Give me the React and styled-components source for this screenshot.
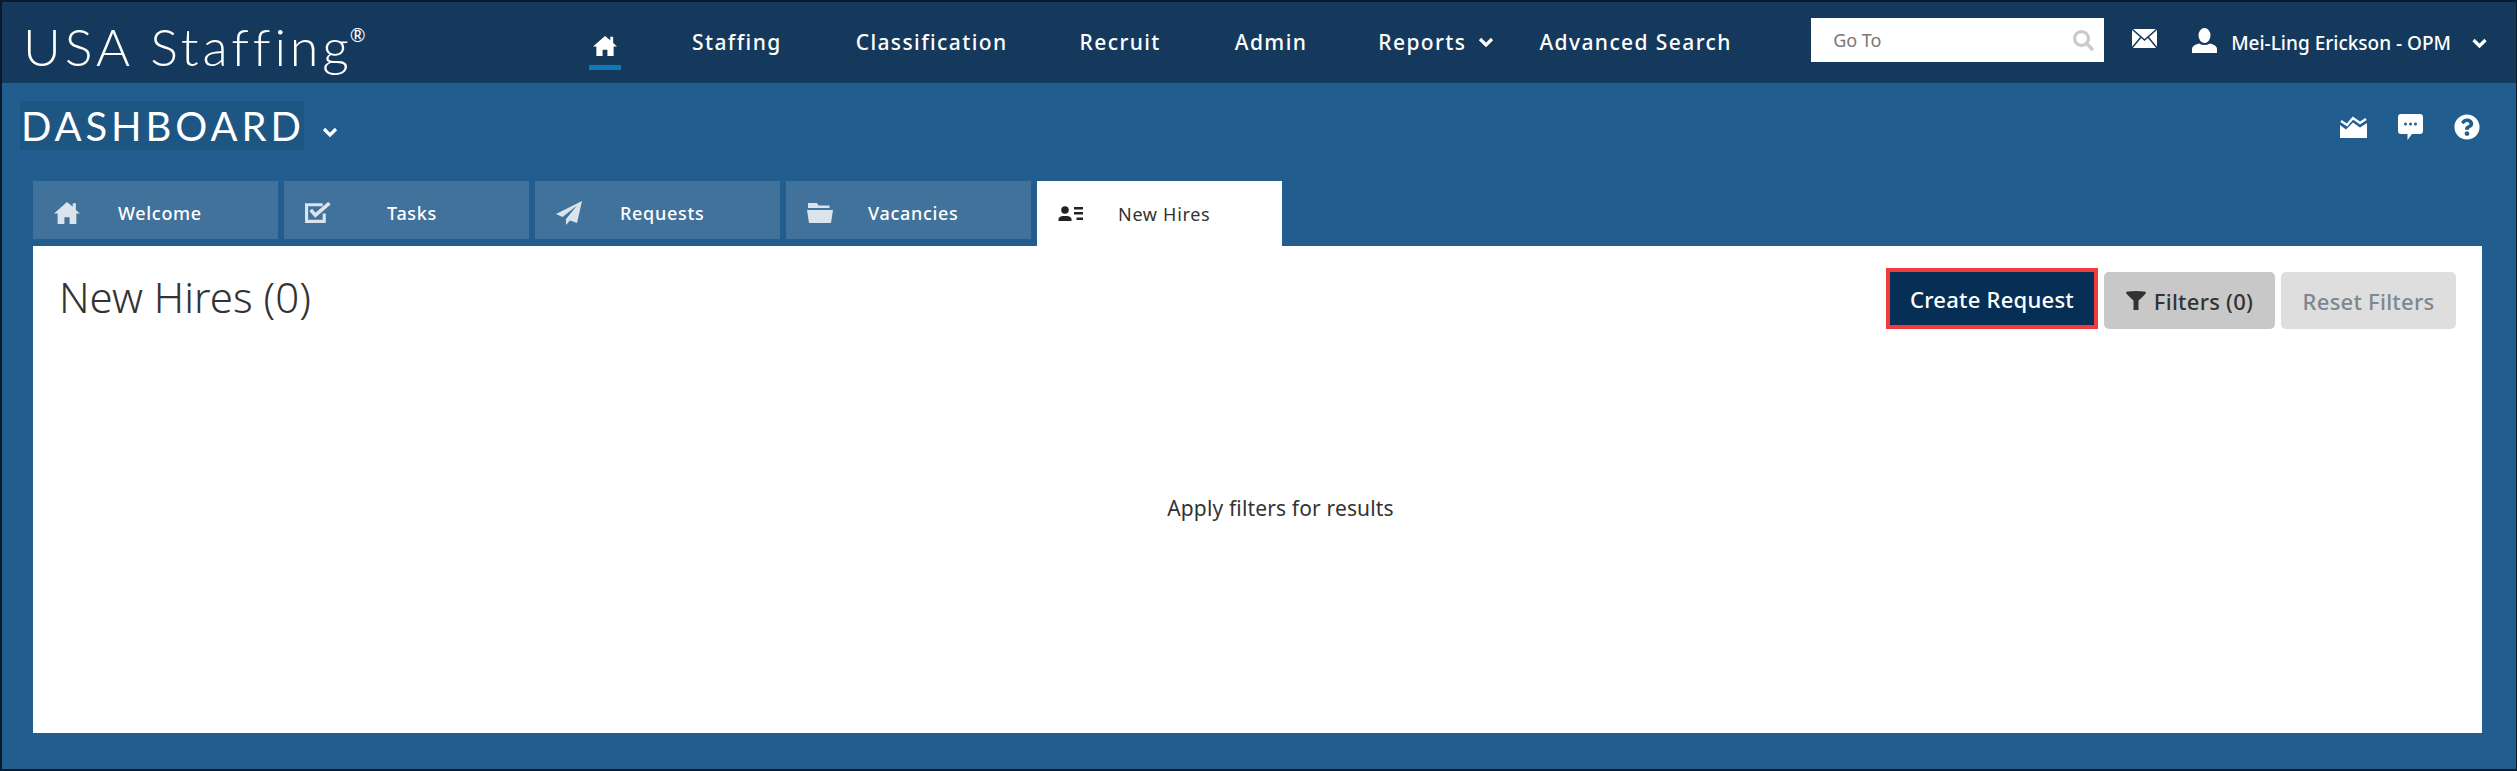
import styled, { createGlobalStyle } from "styled-components";
import { FaQuestionCircle, FaSearch } from "react-icons/fa";

const GlobalStyle = createGlobalStyle`
  html, body { margin: 0; padding: 0; }
  body { font-family: "Noto Sans", "Open Sans", sans-serif; background: #215e8f; }
`;

const Page = styled.div`
  width: 2517px;
  height: 771px;
  box-sizing: border-box;
  border: 2px solid #0a1a2a;
  border-right-width: 1px;
  background: #215e8f;
  overflow: hidden;
  display: flex;
  flex-direction: column;
`;

const TopBar = styled.header`
  height: 81px;
  background: #14395c;
  display: flex;
  align-items: center;
  color: #fff;
  flex-shrink: 0;
`;

const Logo = styled.div`
  width: 587px;
  padding: 7px 0 0 21px;
  box-sizing: border-box;
  font-family: "Lato", sans-serif;
  font-weight: 300;
  font-size: 52px;
  letter-spacing: 3.9px;
  white-space: nowrap;
  sup { font-size: 19px; font-weight: 400; line-height: 0; vertical-align: 24px; letter-spacing: 0; margin-left: -3px; }
`;

const Nav = styled.nav`
  display: flex;
  align-items: center;
  align-self: stretch;
  flex: 1;
  padding-bottom: 2px;
  font-size: 21px;
  font-weight: 500;
  letter-spacing: 1.4px;
`;

const NavItem = styled.a`
  color: #fff;
  white-space: nowrap;
  display: flex;
  align-items: center;
  gap: 12px;
  margin-left: ${(p) => p.$gap}px;
`;

const HomeLink = styled.a`
  align-self: flex-start;
  width: 32px;
  height: 31px;
  margin-top: 32px;
  color: #fff;
  border-bottom: 5px solid #0f7ab8;
  display: flex;
  justify-content: center;
`;

const Search = styled.div`
  width: 293px;
  height: 44px;
  margin-top: -5px;
  background: #fff;
  box-sizing: border-box;
  padding: 0 10px 0 22px;
  display: flex;
  align-items: center;
  justify-content: space-between;
  font-size: 18px;
  color: #777;
  svg { color: #cbcbcb; font-size: 21px; }
`;

const MailIcon = styled.svg`
  width: 25px;
  height: 19px;
  margin: -8px 0 0 28px;
  flex-shrink: 0;
`;

const UserArea = styled.div`
  display: flex;
  align-items: center;
  font-size: 19px;
  font-weight: 500;
  color: #fff;
  margin-left: 35px;
  white-space: nowrap;
`;

const UserIcon = styled.svg`
  width: 25px;
  height: 25px;
  margin-top: -5px;
`;

const UserName = styled.span`
  margin-left: 14px;
`;

const Chevron = styled.svg`
  width: ${(p) => p.$w || 16}px;
  height: 10px;
  margin-left: ${(p) => p.$left || 0}px;
  flex-shrink: 0;
`;

const ChevronEnd = styled(Chevron)`
  margin-right: 28px;
`;

const Row = styled.div`
  display: flex;
  align-items: flex-start;
  justify-content: space-between;
  height: 98px;
  flex-shrink: 0;
  padding: 18px 36px 0 18px;
  box-sizing: border-box;
`;

const TitleWrap = styled.div`
  display: flex;
  align-items: center;
  color: #fff;
`;

const Title = styled.h1`
  margin: 0;
  font-family: "Lato", sans-serif;
  font-weight: 400;
  font-size: 40px;
  letter-spacing: 3.9px;
  background: #1d5583;
  height: 49px;
  line-height: 50px;
  width: 284px;
  box-sizing: border-box;
  padding-left: 1px;
  white-space: nowrap;
`;

const TitleChevron = styled(Chevron)`
  margin: 13px 0 0 18px;
`;

const HelpIcons = styled.div`
  display: flex;
  align-items: center;
  gap: 31px;
  color: #fff;
  margin-top: 13px;
  > svg:last-child { width: 26px; height: 26px; }
`;

const Tabs = styled.div`
  display: flex;
  gap: 6px;
  padding-left: 31px;
  height: 65px;
  flex-shrink: 0;
`;

const Tab = styled.div`
  width: 245px;
  height: ${(p) => (p.$active ? "65px" : "58px")};
  background: ${(p) => (p.$active ? "#fff" : "#41729b")};
  color: ${(p) => (p.$active ? "#333" : "#fff")};
  display: flex;
  align-items: center;
  font-size: 18px;
  font-weight: ${(p) => (p.$active ? 400 : 500)};
  letter-spacing: 0.7px;
  box-sizing: border-box;
  padding: ${(p) => (p.$active ? "0 0 0 21px" : "5px 0 0 21px")};
`;

const TabIcon = styled.svg`
  width: 26px;
  height: ${(p) => p.$h}px;
  flex-shrink: 0;
  color: ${(p) => p.$c || "#dbe4ec"};
`;

const TabLabel = styled.span`
  margin-left: ${(p) => p.$offset}px;
`;

const Panel = styled.main`
  margin-left: 31px;
  width: 2449px;
  height: 487px;
  background: #fff;
  box-sizing: border-box;
  padding: 22px 26px 0 26px;
  display: flex;
  flex-direction: column;
`;

const PanelHead = styled.div`
  display: flex;
  align-items: flex-start;
  justify-content: space-between;
`;

const PanelTitle = styled.h2`
  margin: 4px 0 0;
  font-weight: 300;
  font-size: 42px;
  color: #333;
  line-height: 50px;
`;

const Buttons = styled.div`
  display: flex;
  align-items: flex-end;
  gap: 6px;
`;

const Button = styled.button`
  height: ${(p) => (p.$focus ? 61 : 57)}px;
  width: ${(p) => p.$w}px;
  border: ${(p) => (p.$focus ? "4px solid #f03c3c" : "0")};
  border-radius: ${(p) => (p.$focus ? "0" : "5px")};
  background: ${(p) => p.$bg};
  color: ${(p) => p.$fg};
  font-family: inherit;
  font-size: 22px;
  font-weight: 500;
  letter-spacing: 0.25px;
  display: flex;
  align-items: center;
  justify-content: center;
  gap: 8px;
  padding: 0;
`;

const Empty = styled.div`
  text-align: center;
  font-size: 21px;
  letter-spacing: 0.15px;
  color: #333;
  margin-top: 165px;
  padding-left: 46px;
`;

const Chev = ({ as: C = Chevron, ...rest }) => (
  <C viewBox="0 0 16 10" fill="none" stroke="currentColor" strokeWidth="3.2" {...rest}>
    <polyline points="2,2 8,8 14,2" />
  </C>
);

export default function App() {
  return (
    <>
      <GlobalStyle />
      <Page>
        <TopBar>
          <Logo>USA Staffing<sup>®</sup></Logo>
          <Nav>
            <HomeLink>
              <svg width="24" height="23" viewBox="0 0 25 22" fill="currentColor"><path d="M12.5 1L0 12h3.5v10h6.5v-6.5h5V22h6.5V12H25l-4-3.5V2h-3v3.5z" /></svg>
            </HomeLink>
            <NavItem $gap={71}>Staffing</NavItem>
            <NavItem $gap={74}>Classification</NavItem>
            <NavItem $gap={72}>Recruit</NavItem>
            <NavItem $gap={74}>Admin</NavItem>
            <NavItem $gap={71}>Reports<Chev /></NavItem>
            <NavItem $gap={45}>Advanced Search</NavItem>
          </Nav>
          <Search>Go To <FaSearch /></Search>
          <MailIcon viewBox="0 0 25 19">
            <rect width="25" height="19" fill="#fff" />
            <path d="M0 0l12.5 11L25 0M0 19l9-11M25 19L16 8" fill="none" stroke="#14395c" strokeWidth="1.5" />
          </MailIcon>
          <UserArea>
            <UserIcon viewBox="0 0 25 25" fill="currentColor">
              <ellipse cx="12.5" cy="7.5" rx="6" ry="7.5" />
              <path d="M0 25v-4q0-4 7-5.5q5.500 3 11 0q7 1.500 7 5.500v4z" />
            </UserIcon>
            <UserName>Mei-Ling Erickson - OPM</UserName>
            <Chev as={ChevronEnd} $w={17} $left={20} />
          </UserArea>
        </TopBar>
        <Row>
          <TitleWrap>
            <Title>DASHBOARD</Title>
            <Chev as={TitleChevron} />
          </TitleWrap>
          <HelpIcons>
            <svg width="27" height="22" viewBox="0 0 27 22" fill="currentColor">
              <polyline points="1,5 7,9 13,2 20,7 26,3" fill="none" stroke="currentColor" strokeWidth="2.4" />
              <path d="M0 9l6 4.500 7-7 7 5 7-4.500V22H0z" />
            </svg>
            <svg width="25" height="26" viewBox="0 0 25 26" fill="currentColor">
              <path d="M3 0h19a3 3 0 0 1 3 3v14a3 3 0 0 1-3 3h-8l-4.500 6v-6H3a3 3 0 0 1-3-3V3a3 3 0 0 1 3-3z" />
              <circle cx="7.500" cy="10" r="1.500" fill="#215e8f" />
              <circle cx="12.500" cy="10" r="1.500" fill="#215e8f" />
              <circle cx="17.500" cy="10" r="1.500" fill="#215e8f" />
            </svg>
            <FaQuestionCircle />
          </HelpIcons>
        </Row>
        <Tabs>
          <Tab>
            <TabIcon $h={23} viewBox="0 0 25 22" fill="currentColor"><path d="M12.5 1L0 12h3.5v10h6.5v-6.500h5V22h6.500V12H25l-4-3.500V2h-3v3.500z" /></TabIcon>
            <TabLabel $offset={38}>Welcome</TabLabel>
          </Tab>
          <Tab>
            <TabIcon $h={21} viewBox="0 0 25 20" fill="none" stroke="currentColor">
              <path d="M17 2.500H1.500V18.500h17V11" strokeWidth="3" />
              <path d="M5.500 7.500l4.500 5L23.500 1" strokeWidth="3.500" />
            </TabIcon>
            <TabLabel $offset={56}>Tasks</TabLabel>
          </Tab>
          <Tab>
            <TabIcon $h={24} viewBox="0 0 26 24" fill="currentColor"><path d="M26 0L0 13l6.500 3L21 4.500 10 18v6l4-4.500 7 2.500z" /></TabIcon>
            <TabLabel $offset={38}>Requests</TabLabel>
          </Tab>
          <Tab>
            <TabIcon $h={20} viewBox="0 0 26 20" fill="currentColor"><path d="M1 0h9l1.500 2.500h11v2.500H1zM0 7h26l-2 13H2z" /></TabIcon>
            <TabLabel $offset={35}>Vacancies</TabLabel>
          </Tab>
          <Tab $active>
            <TabIcon $h={15} $c="#222" viewBox="0 0 25 15" fill="currentColor">
              <circle cx="6.500" cy="4" r="3.800" />
              <path d="M0 15v-2q0-2 4-3h5q4 1 4 3v2zM15.500 1h9v2.500h-9zM15.500 6h9v2.500h-9zM18 11.500h6.500V14H18z" />
            </TabIcon>
            <TabLabel $offset={34}>New Hires</TabLabel>
          </Tab>
        </Tabs>
        <Panel>
          <PanelHead>
            <PanelTitle>New Hires (0)</PanelTitle>
            <Buttons>
              <Button $focus $w={212} $bg="#072f55" $fg="#fff">Create Request</Button>
              <Button $w={171} $bg="#c8c8c8" $fg="#333">
                <svg width="20" height="19" viewBox="0 0 20 19" fill="currentColor"><path d="M0 1.500Q0 0 10 0t10 1.500Q20 3 12.500 9.500V19h-5V9.500Q0 3 0 1.500z" /></svg>
                Filters (0)
              </Button>
              <Button $w={175} $bg="#dedede" $fg="#7c8790">Reset Filters</Button>
            </Buttons>
          </PanelHead>
          <Empty>Apply filters for results</Empty>
        </Panel>
      </Page>
    </>
  );
}
